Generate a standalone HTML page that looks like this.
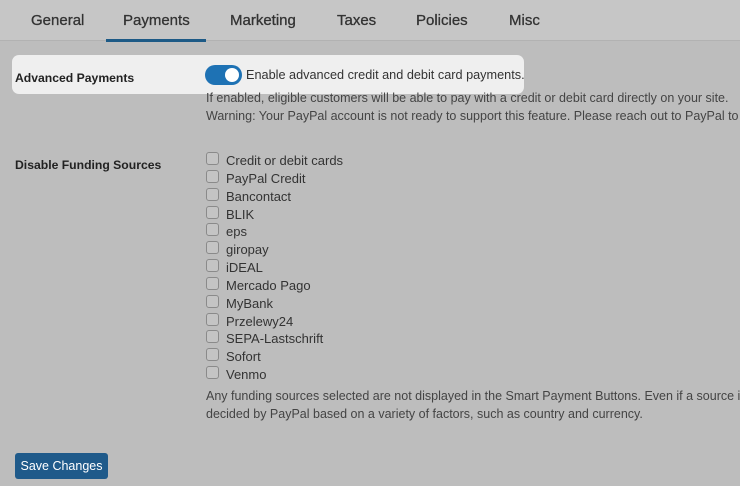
<!DOCTYPE html>
<html><head><style>
*{margin:0;padding:0;box-sizing:border-box}
body{width:740px;height:486px;overflow:hidden;background:#bdbdbd;font-family:"Liberation Sans",sans-serif;color:#2a2a2a;position:relative}
.hdr{position:absolute;left:0;top:0;width:740px;height:41px;background:#c6c6c6;border-bottom:1px solid #b2b2b2}
.tab{position:absolute;top:12px;font-size:15px;color:#333;-webkit-text-stroke:0.3px #333}
.ul{position:absolute;left:106px;top:39px;width:100px;height:3px;background:#1d5a86}
.hl{position:absolute;left:12px;top:55px;width:512px;height:39px;background:#efefef;border-radius:7px}
.lbl{position:absolute;font-size:12.2px;font-weight:bold;color:#222}
.t{position:absolute;font-size:13px;color:#333;white-space:nowrap}
.d{position:absolute;font-size:12.5px;color:#444;white-space:nowrap}
.tog{position:absolute;left:205px;top:65px;width:37px;height:20px;border-radius:10px;background:#1e72b4}
.tog:after{content:"";position:absolute;right:3px;top:3px;width:14px;height:14px;border-radius:50%;background:#fff}
.cb{position:absolute;left:206px;width:13px;height:13px;border:1px solid #8a8a8a;border-radius:3px;background:#c4c4c4}
.btn{position:absolute;left:15px;top:453px;width:93px;height:26px;background:#1f5a8a;border-radius:3px;color:#fff;font-size:12.5px;text-align:center;line-height:26px}
</style></head><body>
<div class="hdr"></div>
<div class="tab" style="left:31px">General</div>
<div class="tab" style="left:123px">Payments</div>
<div class="tab" style="left:230px">Marketing</div>
<div class="tab" style="left:337px">Taxes</div>
<div class="tab" style="left:416px">Policies</div>
<div class="tab" style="left:509px">Misc</div>
<div class="ul"></div>
<div class="hl"></div>
<div class="lbl" style="left:15px;top:71px">Advanced Payments</div>
<div class="tog"></div>
<div class="t" style="left:246px;top:68px;font-size:12.7px">Enable advanced credit and debit card payments.</div>
<div class="d" style="left:206px;top:91px">If enabled, eligible customers will be able to pay with a credit or debit card directly on your site.</div>
<div class="d" style="left:206px;top:109px">Warning: Your PayPal account is not ready to support this feature. Please reach out to PayPal to</div>
<div class="lbl" style="left:15px;top:158px">Disable Funding Sources</div>
<div class="cb" style="top:152px"></div><div class="t" style="left:226px;top:153px">Credit or debit cards</div>
<div class="cb" style="top:170px"></div><div class="t" style="left:226px;top:171px">PayPal Credit</div>
<div class="cb" style="top:188px"></div><div class="t" style="left:226px;top:189px">Bancontact</div>
<div class="cb" style="top:206px"></div><div class="t" style="left:226px;top:207px">BLIK</div>
<div class="cb" style="top:223px"></div><div class="t" style="left:226px;top:224px">eps</div>
<div class="cb" style="top:241px"></div><div class="t" style="left:226px;top:242px">giropay</div>
<div class="cb" style="top:259px"></div><div class="t" style="left:226px;top:260px">iDEAL</div>
<div class="cb" style="top:277px"></div><div class="t" style="left:226px;top:278px">Mercado Pago</div>
<div class="cb" style="top:295px"></div><div class="t" style="left:226px;top:296px">MyBank</div>
<div class="cb" style="top:313px"></div><div class="t" style="left:226px;top:314px">Przelewy24</div>
<div class="cb" style="top:330px"></div><div class="t" style="left:226px;top:331px">SEPA-Lastschrift</div>
<div class="cb" style="top:348px"></div><div class="t" style="left:226px;top:349px">Sofort</div>
<div class="cb" style="top:366px"></div><div class="t" style="left:226px;top:367px">Venmo</div>
<div class="d" style="left:206px;top:389px">Any funding sources selected are not displayed in the Smart Payment Buttons. Even if a source i</div>
<div class="d" style="left:206px;top:407px">decided by PayPal based on a variety of factors, such as country and currency.</div>
<div class="btn">Save Changes</div>
</body></html>
